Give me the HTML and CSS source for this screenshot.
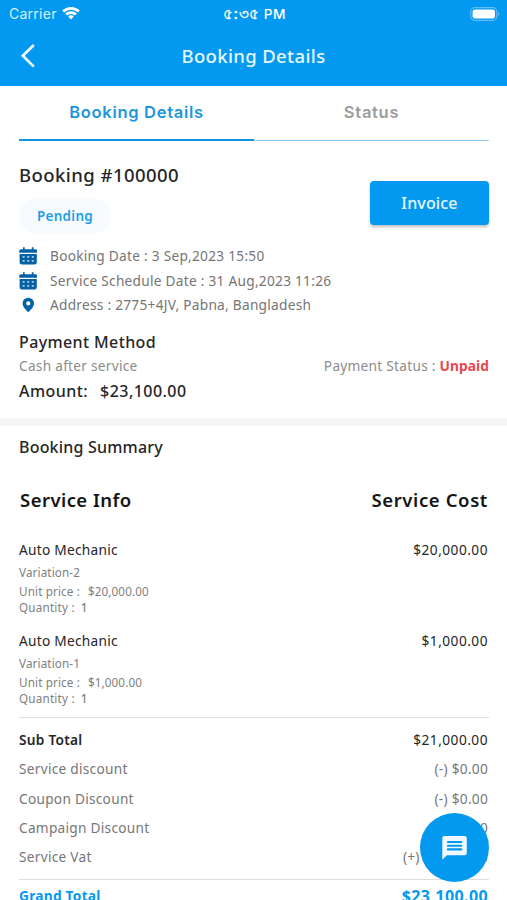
FILE: index.html
```html
<!DOCTYPE html>
<html lang="en">
<head>
<meta charset="utf-8">
<title>Booking Details</title>
<link rel="stylesheet" href="styles.css">
</head>
<body>
<div class="screen">
  <header class="header">
    <div class="status-bar">
      <div class="carrier">Carrier
        <svg class="wifi" viewBox="0 0 18 14" width="18" height="14"><path d="M.2 4.6a12.500 12.500 0 0 1 17.600 0L15.800 6.600a9.700 9.700 0 0 0-13.600 0zM3.200 7.600a8.200 8.200 0 0 1 11.600 0l-2 2a5.400 5.400 0 0 0-7.600 0zM6.200 10.500a4.200 4.200 0 0 1 5.600 0L9 13.400z" fill="#fff"/></svg>
      </div>
      <div class="time"><span class="digits">৫:৩৫</span> PM</div>
      <svg class="battery" viewBox="0 0 31 14" width="31" height="14"><rect x="1.8" y=".6" width="26" height="12.8" rx="4" fill="none" stroke="#65bdf5" stroke-width="1.1"/><rect x="3.600" y="2.500" width="22.400" height="9" rx="2.300" fill="#fff"/><path d="M29 4.700q2 2.300 0 4.600z" fill="#65bdf5"/></svg>
    </div>
    <div class="app-bar">
      <svg class="back" viewBox="0 0 16 26" width="16" height="26"><path d="M13.800 2 2.800 12.800l11 10.800" fill="none" stroke="#f2faff" stroke-width="2.700"/></svg>
      <h1 class="title">Booking Details</h1>
    </div>
  </header>

  <nav class="tabs">
    <div class="tab active">Booking Details</div>
    <div class="tab">Status</div>
  </nav>

  <section class="booking">
    <div class="booking-top">
      <div>
        <h2 class="booking-id">Booking #100000</h2>
        <span class="pill">Pending</span>
      </div>
      <button class="invoice">Invoice</button>
    </div>
    <ul class="facts">
      <li><svg viewBox="0 0 18 18" width="18" height="18"><use href="#cal"/></svg><span>Booking Date : 3 Sep,2023 15:50</span></li>
      <li><svg viewBox="0 0 18 18" width="18" height="18"><use href="#cal"/></svg><span>Service Schedule Date : 31 Aug,2023 11:26</span></li>
      <li><svg viewBox="0 0 18 18" width="18" height="18"><path fill-rule="evenodd" d="M9.300 1.700a5.700 5.700 0 0 0-5.700 5.700c0 3.600 3.700 6.500 5.700 8.900 2-2.400 5.700-5.300 5.700-8.900a5.700 5.700 0 0 0-5.700-5.700zm0 3.600a2.100 2.100 0 1 1 0 4.200 2.100 2.100 0 0 1 0-4.200z" fill="#0461a5"/></svg><span>Address : 2775+4JV, Pabna, Bangladesh</span></li>
    </ul>
    <h3 class="label">Payment Method</h3>
    <div class="row pay"><span>Cash after service</span><span>Payment Status : <b>Unpaid</b></span></div>
    <div class="amount"><span>Amount:</span><span>$23,100.00</span></div>
  </section>

  <section class="summary">
    <h3 class="summary-title">Booking Summary</h3>
    <div class="row heads"><span>Service Info</span><span class="cost">Service Cost</span></div>
    <article class="item">
      <div class="row name"><span>Auto Mechanic</span><span class="price">$20,000.00</span></div>
      <p class="variation">Variation-2</p>
      <p class="unit"><span>Unit price :</span><span>$20,000.00</span></p>
      <p class="quantity"><span>Quantity :</span><b>1</b></p>
    </article>
    <article class="item">
      <div class="row name"><span>Auto Mechanic</span><span class="price">$1,000.00</span></div>
      <p class="variation">Variation-1</p>
      <p class="unit"><span>Unit price :</span><span>$1,000.00</span></p>
      <p class="quantity"><span>Quantity :</span><b>1</b></p>
    </article>
    <div class="totals">
      <div class="row sub"><span>Sub Total</span><span class="price">$21,000.00</span></div>
      <div class="row"><span>Service discount</span><span>(-) $0.00</span></div>
      <div class="row"><span>Coupon Discount</span><span>(-) $0.00</span></div>
      <div class="row"><span>Campaign Discount</span><span>(-) $0.00</span></div>
      <div class="row"><span>Service Vat</span><span>(+) $2,100.00</span></div>
    </div>
    <div class="row grand"><span>Grand Total</span><span class="grand-price">$23,100.00</span></div>
  </section>

  <div class="chat"><svg viewBox="0 0 25 24" width="25" height="24"><path d="M2.400 0h20.200A2.200 2.200 0 0 1 24.800 2.200v14.800a2.200 2.200 0 0 1-2.200 2.200H4.900L.3 23.700V2.200A2.200 2.200 0 0 1 2.400 0z" fill="#eff8ff"/><path d="M5.900 6h13.400M5.900 9.700h13.400M5.900 13.400h13.400" stroke="#0399ee" stroke-width="2.100" stroke-linecap="round"/></svg></div>
</div>
<svg width="0" height="0" class="defs">
  <defs>
    <g id="cal" fill="#0461a5">
      <path d="M2 2.200h14.400A1.800 1.800 0 0 1 18.200 4v1.700H.2V4A1.800 1.800 0 0 1 2 2.200zM4 .3h1.700v3H4zM12.800.3h1.700v3h-1.700zM.6 7h17.200v8.300a2.300 2.300 0 0 1-2.300 2.300H2.900A2.300 2.300 0 0 1 .6 15.300z"/>
      <path d="M3.600 9h2v1.800h-2zM8.200 9h2v1.800h-2zM12.800 9h2v1.800h-2zM3.600 13h2v1.800h-2zM8.200 13h2v1.800h-2zM12.800 13h2v1.800h-2z" fill="#a9cbe3"/>
    </g>
  </defs>
</svg>
</body>
</html>
```
FILE: styles.css
```css
* { box-sizing: border-box; margin: 0; padding: 0; }
body {
  background: #fff;
  color: #262626;
  font: 400 13.7px/20px "Noto Sans", sans-serif;
  letter-spacing: .26px;
  overflow: hidden;
}
.screen { position: relative; height: 900px; overflow: hidden; white-space: nowrap; }
.defs { position: absolute; }

.header { height: 86px; background: #0399f0; color: #fff; }
.status-bar {
  display: grid;
  grid-template-columns: 1fr auto 1fr;
  align-items: center;
  height: 28px;
  padding: 0 7px 0 9px;
  font: 400 14px/20px Inter, "Noto Sans", sans-serif;
}
.carrier { display: flex; align-items: center; gap: 5px; color: #d9f0ff; }
.wifi { margin-top: -2px; }
.time { font-weight: 500; font-size: 13.7px; letter-spacing: .5px; }
.digits { font-size: 14.700px; -webkit-text-stroke: .4px #fff; }
.battery { justify-self: end; margin-top: -1px; }
.app-bar { display: grid; grid-template-columns: 60px 1fr 60px; align-items: center; height: 56px; }
.back { margin-left: 20px; }
.title { font-size: 18.5px; line-height: 26px; font-weight: 500; letter-spacing: .35px; text-align: center; color: #e9f7ff; }

.tabs { display: flex; height: 55px; margin: 0 18px 0 19px; }
.tab {
  flex: 1;
  padding-top: 16px;
  border-bottom: 1px solid #8fccf5;
  text-align: center;
  font: 600 16.5px/20px Inter, sans-serif;
  letter-spacing: .7px;
  color: #9c9c9c;
}
.tab.active { border-bottom: 2px solid #1295e0; color: #1c97de; }

.booking { height: 277px; padding: 21px 18px 0 19px; }
.booking-top { display: flex; justify-content: space-between; height: 101px; }
.booking-id { font-size: 18.5px; line-height: 26px; font-weight: 500; letter-spacing: .45px; }
.pill {
  display: block;
  width: 92px;
  height: 36px;
  margin-top: 10px;
  border-radius: 18px;
  background: #f7fbfd;
  color: #1c9fea;
  font-size: 13.5px;
  line-height: 36px;
  font-weight: 600;
  text-align: center;
}
.invoice {
  width: 119px;
  height: 44px;
  margin-top: 19px;
  border: 0;
  border-radius: 4px;
  background: #0399f0;
  box-shadow: 0 2px 3px rgba(0, 0, 0, .25);
  color: #e9f7ff;
  font: 500 16px/20px "Noto Sans", sans-serif;
  letter-spacing: .15px;
}
.facts { margin-top: -19px; list-style: none; color: #757575; }
.facts li { display: flex; align-items: center; gap: 13px; height: 24.5px; }
.label { margin-top: 12px; font-size: 16px; line-height: 24px; font-weight: 500; letter-spacing: .38px; }
.row { display: flex; justify-content: space-between; }
.pay { height: 25px; line-height: 24px; color: #8c8c8c; }
.pay b { color: #e9474d; letter-spacing: .1px; }
.amount { display: flex; gap: 12px; font-size: 16px; line-height: 25px; font-weight: 500; letter-spacing: .45px; }

.summary { padding: 0 18px 0 19px; border-top: 8px solid #f5f5f5; }
.summary-title { margin-top: 9px; font-size: 16px; line-height: 24px; font-weight: 500; letter-spacing: .2px; }
.heads { margin-top: 28px; padding: 0 1px; font-size: 18.5px; line-height: 26px; font-weight: 600; letter-spacing: .45px; color: #151515; }
.cost { letter-spacing: .62px; }
.item { height: 90.5px; padding-right: 1px; }
.item:first-of-type { margin-top: 27px; }
.name { line-height: 20px; }
.price { letter-spacing: .48px; }
.variation, .unit, .quantity { font-size: 11.7px; color: #808080; letter-spacing: .12px; }
.variation { margin-top: 4px; line-height: 16px; }
.unit { display: flex; gap: 8px; margin-top: 3px; line-height: 16px; }
.quantity { display: flex; gap: 6px; line-height: 16px; letter-spacing: .2px; }
.quantity b { font-weight: 500; }
.totals { height: 163px; margin-top: -4px; padding-top: 7px; border-top: 1px solid #dedede; border-bottom: 1px solid #dedede; color: #777; }
.totals .row { height: 29.3px; padding-right: 1px; line-height: 29px; }
.totals .sub { color: #262626; }
.sub span:first-child { font-weight: 600; }
.grand { padding: 4px 1px 0 0; line-height: 24px; font-weight: 700; color: #0399f0; }
.grand-price { font-size: 16px; letter-spacing: .4px; }

.chat {
  position: absolute;
  left: 420px;
  top: 813px;
  width: 69px;
  height: 69px;
  border-radius: 50%;
  background: #0399ee;
  display: grid;
  place-items: center;
}
```
